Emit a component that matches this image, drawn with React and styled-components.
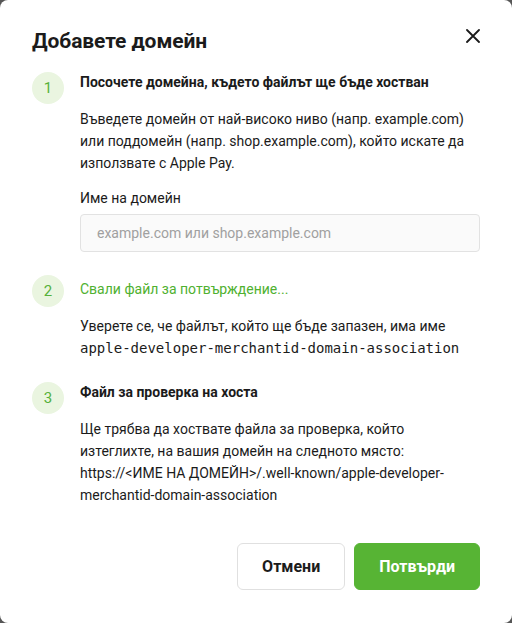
import React from "react"
import styled, { createGlobalStyle } from "styled-components"

const Global = createGlobalStyle`
  html, body {
    margin: 0;
    padding: 0;
    background: #565656;
  }
  * { box-sizing: border-box; }
`

const Modal = styled.div`
  width: 512px;
  height: 623px;
  background: #fff;
  border-radius: 8px;
  padding: 27px 32px 33px 32px;
  display: flex;
  flex-direction: column;
  font-family: Roboto, "Noto Sans", sans-serif;
  color: #1b1b1b;
`

const Header = styled.div`
  display: flex;
  justify-content: space-between;
  align-items: flex-start;
`

const Title = styled.h2`
  margin: 0;
  font-size: 21px;
  line-height: 28px;
  font-weight: 700;
  letter-spacing: -0.1px;
`

const CloseButton = styled.button`
  border: none;
  background: none;
  padding: 0;
  margin: 1px 0 0 0;
  width: 14px;
  height: 16px;
  cursor: pointer;
  display: flex;
  align-items: center;
  justify-content: center;
`

const Steps = styled.div`
  display: flex;
  flex-direction: column;
  gap: 23px;
  margin-top: 17px;
`

const Step = styled.div`
  display: grid;
  grid-template-columns: 32px 1fr;
  column-gap: 16px;
  align-items: start;
`

const Badge = styled.div`
  width: 32px;
  height: 32px;
  border-radius: 50%;
  background: #eaf5e0;
  color: #56b13a;
  font-size: 15px;
  display: flex;
  align-items: center;
  justify-content: center;
`

const Body = styled.div`
  display: flex;
  flex-direction: column;
`

const Heading = styled.div`
  font-size: 14px;
  line-height: 20px;
  font-weight: 700;
  margin-bottom: 16px;
`

const Link = styled.a`
  font-size: 14px;
  line-height: 20px;
  color: #4fb130;
  text-decoration: none;
  margin-top: 4px;
  margin-bottom: 16px;
  cursor: pointer;
`

const Text = styled.p`
  margin: 0;
  font-size: 14px;
  line-height: 22px;
  color: #1b1b1b;
`

const Mono = styled.code`
  font-family: "DejaVu Sans Mono", "Liberation Mono", monospace;
  font-size: 14px;
  line-height: 22px;
  color: #1b1b1b;
`

const Label = styled.label`
  margin-top: 14px;
  margin-bottom: 6px;
  font-size: 14px;
  line-height: 20px;
`

const Input = styled.input`
  width: 100%;
  height: 38px;
  border: 1px solid #e2e2e2;
  border-radius: 4px;
  background: #fafafa;
  padding: 0 16px;
  font-family: Roboto, "Noto Sans", sans-serif;
  font-size: 14px;
  color: #1b1b1b;
  outline: none;

  &::placeholder {
    color: #a0a0a0;
  }
`

const Footer = styled.div`
  margin-top: auto;
  display: flex;
  justify-content: flex-end;
  gap: 9px;
`

const Button = styled.button`
  height: 47px;
  padding: 0 24px;
  border-radius: 6px;
  font-family: Roboto, "Noto Sans", sans-serif;
  font-size: 16px;
  font-weight: 700;
  cursor: pointer;
  border: 1px solid ${p => (p.primary ? "#57b434" : "#e0e0e0")};
  background: ${p => (p.primary ? "#57b434" : "#fff")};
  color: ${p => (p.primary ? "#fff" : "#1b1b1b")};
`

const App = () => {
  return (
    <>
      <Global />
      <Modal>
        <Header>
          <Title>Добавете домейн</Title>
          <CloseButton aria-label="Затвори">
            <svg width="14" height="14" viewBox="0 0 14 14">
              <path d="M1 1 L13 13 M13 1 L1 13" stroke="#1b1b1b" strokeWidth="1.8" strokeLinecap="round" />
            </svg>
          </CloseButton>
        </Header>

        <Steps>
          <Step>
            <Badge>1</Badge>
            <Body>
              <Heading>Посочете домейна, където файлът ще бъде хостван</Heading>
              <Text>
                Въведете домейн от най-високо ниво (напр. example.com)
                или поддомейн (напр. shop.example.com), който искате да
                използвате с Apple Pay.
              </Text>
              <Label>Име на домейн</Label>
              <Input placeholder="example.com или shop.example.com" />
            </Body>
          </Step>

          <Step>
            <Badge>2</Badge>
            <Body>
              <Link>Свали файл за потвърждение...</Link>
              <Text>
                Уверете се, че файлът, който ще бъде запазен, има име
                <br />
                <Mono>apple-developer-merchantid-domain-association</Mono>
              </Text>
            </Body>
          </Step>

          <Step>
            <Badge>3</Badge>
            <Body>
              <Heading>Файл за проверка на хоста</Heading>
              <Text>
                Ще трябва да хоствате файла за проверка, който
                изтеглихте, на вашия домейн на следното място:
                https://&lt;ИМЕ НА ДОМЕЙН&gt;/.well-known/apple-developer-merchantid-domain-association
              </Text>
            </Body>
          </Step>
        </Steps>

        <Footer>
          <Button>Отмени</Button>
          <Button primary>Потвърди</Button>
        </Footer>
      </Modal>
    </>
  )
}

export default App
